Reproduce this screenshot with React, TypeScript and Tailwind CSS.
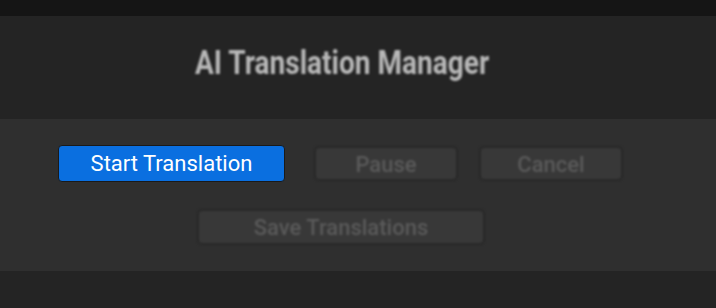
export default function App() {
  return (
    <div className="w-[716px] h-[308px] bg-[#242424] flex flex-col" style={{ fontFamily: 'Roboto, "Liberation Sans", sans-serif' }}>
      <div className="h-[16px] bg-[#151515]" />
      <div className="h-[103px] flex items-center justify-center pb-[10px] pr-[32px]">
        <h1 className="text-[33px] leading-none font-bold text-[#b8b8b8] blur-[1px] scale-x-[0.85] whitespace-nowrap">AI Translation Manager</h1>
      </div>
      <div className="h-[152px] bg-[#2f2f2f] flex flex-col pt-[26px]">
        <div className="flex items-center">
          <button className="ml-[58px] w-[227px] h-[37px] bg-[#0a6fe0] border border-[#1a1a1a] rounded-[4px] text-white text-[22px]">
            Start Translation
          </button>
          <button className="ml-[29px] w-[144px] h-[35px] bg-[#383838] border-2 border-[#282828] rounded-[5px] text-[#5a5a5a] text-[22px] font-medium blur-[1px]">
            Pause
          </button>
          <button className="ml-[21px] w-[144px] h-[35px] bg-[#383838] border-2 border-[#282828] rounded-[5px] text-[#5a5a5a] text-[22px] font-medium blur-[1px]">
            Cancel
          </button>
        </div>
        <div className="flex mt-[27px]">
          <button className="ml-[197px] w-[288px] h-[36px] bg-[#383838] border-2 border-[#282828] rounded-[5px] text-[#5a5a5a] text-[22px] font-medium blur-[1px]">
            Save Translations
          </button>
        </div>
      </div>
    </div>
  )
}
